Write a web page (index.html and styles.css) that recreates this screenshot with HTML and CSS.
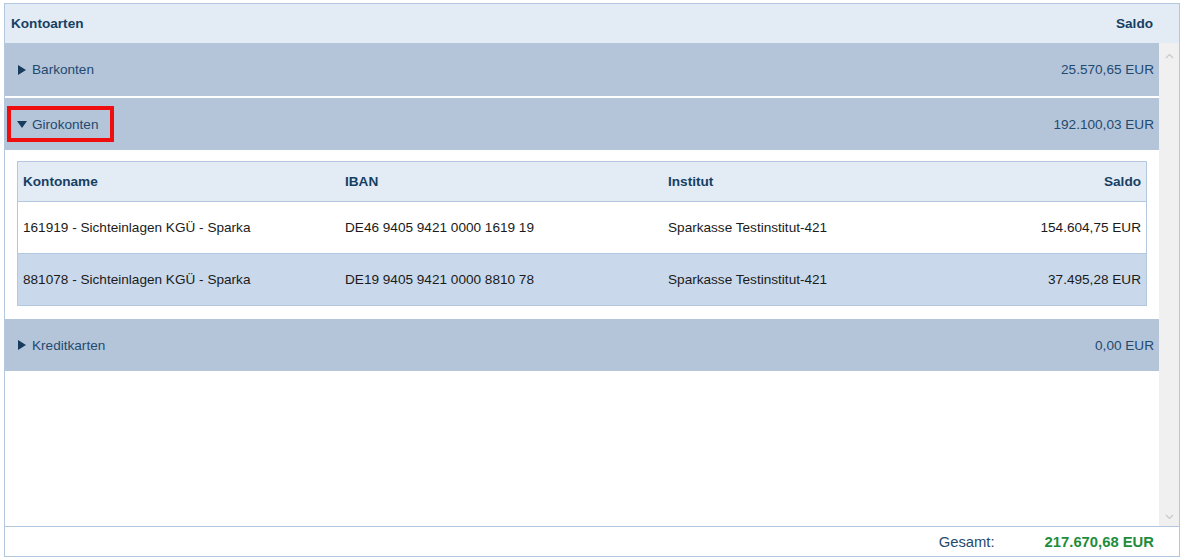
FILE: index.html
```html
<!DOCTYPE html>
<html lang="de">
<head>
  <meta charset="UTF-8">
  <title>Kontoarten</title>
  <link rel="stylesheet" href="styles.css">
</head>
<body>
  <div class="panel">
    <!-- Column heads -->
    <div class="panel-head">
      <span>Kontoarten</span>
      <span>Saldo</span>
    </div>

    <div class="panel-body">
      <div class="groups">
        <div class="group">
          <span class="group-label"><i class="tri tri-right"></i>Barkonten</span>
          <span class="group-sum">25.570,65 EUR</span>
        </div>

        <div class="group is-open">
          <span class="group-label"><i class="tri tri-down"></i>Girokonten</span>
          <span class="group-sum">192.100,03 EUR</span>
          <span class="mark"></span>
        </div>

        <!-- Expanded accounts of Girokonten -->
        <div class="group-detail">
          <div class="accounts">
            <div class="acc-row acc-head">
              <span>Kontoname</span>
              <span>IBAN</span>
              <span>Institut</span>
              <span class="num">Saldo</span>
            </div>
            <div class="acc-row">
              <span>161919 - Sichteinlagen KGÜ - Sparka</span>
              <span>DE46 9405 9421 0000 1619 19</span>
              <span>Sparkasse Testinstitut-421</span>
              <span class="num">154.604,75 EUR</span>
            </div>
            <div class="acc-row alt">
              <span>881078 - Sichteinlagen KGÜ - Sparka</span>
              <span>DE19 9405 9421 0000 8810 78</span>
              <span>Sparkasse Testinstitut-421</span>
              <span class="num">37.495,28 EUR</span>
            </div>
          </div>
        </div>

        <div class="group">
          <span class="group-label"><i class="tri tri-right"></i>Kreditkarten</span>
          <span class="group-sum">0,00 EUR</span>
        </div>
      </div>

      <!-- Scrollbar track -->
      <div class="scrollbar">
        <svg width="9" height="6" viewBox="0 0 9 6"><path d="M1 5 L4.5 1.5 L8 5" fill="none" stroke="#c6c9cc" stroke-width="1.2"/></svg>
        <svg width="9" height="6" viewBox="0 0 9 6"><path d="M1 1 L4.5 4.5 L8 1" fill="none" stroke="#c6c9cc" stroke-width="1.2"/></svg>
      </div>
    </div>

    <div class="panel-foot">
      <span class="total-label">Gesamt:</span>
      <span class="total-sum">217.670,68 EUR</span>
    </div>
  </div>
</body>
</html>
```

FILE: styles.css
```css
/* Basic reset */
html, body {
  margin: 0;
  padding: 0;
  background: #fff;
  font-family: "Liberation Sans", Arial, sans-serif;
  font-size: 13.6px;
  color: #1f4a70;
}

/* Outer frame */
.panel {
  margin: 3px 0 0 4px;
  width: 1176px;
  height: 554px;
  box-sizing: border-box;
  border: 1px solid #b3c7de;
  display: flex;
  flex-direction: column;
}

.panel-head {
  height: 39px;
  flex: 0 0 39px;
  display: flex;
  align-items: center;
  justify-content: space-between;
  padding: 0 26px 0 6px;
  background: #e3ebf4;
  font-weight: bold;
  color: #163f63;
}

.panel-body {
  flex: 1;
  display: flex;
  min-height: 0;
}

.groups {
  width: 1154px;
  display: flex;
  flex-direction: column;
  gap: 2px;
}

/* Account type rows */
.group {
  position: relative;
  height: 52px;
  flex: 0 0 52px;
  display: flex;
  align-items: center;
  justify-content: space-between;
  padding: 0 5px 0 13px;
  background: #b4c5da;
}
.group:first-child {
  height: 53px;
  flex-basis: 53px;
}
.group-label {
  display: flex;
  align-items: center;
}
.tri {
  display: inline-block;
  width: 0;
  height: 0;
  margin-right: 6px;
}
.tri-right {
  border-top: 5px solid transparent;
  border-bottom: 5px solid transparent;
  border-left: 8px solid #173c5e;
}
.tri-down {
  border-left: 5px solid transparent;
  border-right: 5px solid transparent;
  border-top: 7px solid #173c5e;
  margin-left: -1px;
  margin-right: 5px;
}

/* Red highlight around the open group label */
.mark {
  position: absolute;
  left: 2px;
  top: 8px;
  width: 107px;
  height: 36px;
  box-sizing: border-box;
  border: 4px solid #f00d0d;
}

/* Expanded accounts table */
.group-detail {
  padding: 9px 12px 11px 12px;
}
.accounts {
  border: 1px solid #b3c7de;
}
.acc-row {
  display: grid;
  grid-template-columns: 322px 323px 1fr 160px;
  align-items: center;
  height: 51px;
  padding: 0 5px;
  color: #1b1b1b;
  border-top: 1px solid #b3c7de;
}
.acc-head {
  height: 39px;
  border-top: 0;
  background: #e3ebf4;
  font-weight: bold;
  color: #163f63;
}
.acc-row.alt {
  background: #c9d9eb;
}
.num {
  text-align: right;
}

/* Fake scrollbar */
.scrollbar {
  width: 20px;
  background: #f0f0f0;
  display: flex;
  flex-direction: column;
  justify-content: space-between;
  align-items: center;
  padding: 10px 0 6px;
  box-sizing: border-box;
}

/* Total line */
.panel-foot {
  flex: 0 0 29px;
  display: flex;
  align-items: center;
  justify-content: flex-end;
  gap: 50px;
  padding-right: 25px;
  border-top: 1px solid #b3c7de;
  font-size: 14.8px;
}
.total-label {
  color: #1f4a70;
}
.total-sum {
  font-weight: bold;
  color: #1e8d3b;
}
```
